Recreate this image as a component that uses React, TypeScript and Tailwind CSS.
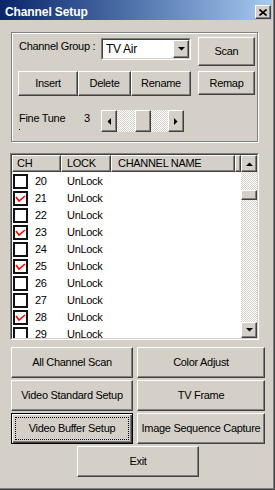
import React from 'react';

const raised =
  'bg-[#d4d0c8] border border-t-white border-l-white border-r-[#404040] border-b-[#404040] shadow-[inset_-1px_-1px_0_#808080]';
const checker =
  'bg-[image:repeating-conic-gradient(#d4d0c8_0_25%,#ffffff_0_50%)] bg-[length:2px_2px]';

function Btn({ className = '', children, focused = false }: { className?: string; children: React.ReactNode; focused?: boolean }) {
  if (focused) {
    return (
      <div className={`bg-[#d4d0c8] border border-black shadow-[inset_1px_1px_0_#fff,inset_-1px_-1px_0_#404040,inset_-2px_-2px_0_#808080] p-[3px] flex whitespace-nowrap ${className}`}>
        <div className="flex-1 flex items-center justify-center border border-dotted border-black">{children}</div>
      </div>
    );
  }
  return <div className={`${raised} flex items-center justify-center whitespace-nowrap ${className}`}>{children}</div>;
}

function Tri({ dir }: { dir: 'up' | 'down' | 'left' | 'right' }) {
  const pts = {
    up: '0,4 7,4 3.5,0.5',
    down: '0,0 7,0 3.5,3.5',
    left: '4,0 4,7 0.5,3.5',
    right: '0,0 0,7 3.5,3.5',
  }[dir];
  const vertical = dir === 'up' || dir === 'down';
  return (
    <svg width={vertical ? 7 : 4} height={vertical ? 4 : 7} viewBox={vertical ? '0 0 7 4' : '0 0 4 7'}>
      <polygon points={pts} fill="#000" />
    </svg>
  );
}

function Check({ on }: { on: boolean }) {
  return (
    <div className="ml-[1px] w-[15px] h-[15px] border-2 border-[#111] bg-white flex items-center justify-center">
      {on && (
        <svg width="11" height="11" viewBox="0 0 11 11">
          <polyline points="1,4 4,8 10,3" fill="none" stroke="#ff0000" strokeWidth="1.6" />
        </svg>
      )}
    </div>
  );
}

const rows = [20, 21, 22, 23, 24, 25, 26, 27, 28, 29];
const checked = [21, 23, 25, 28];

export default function App() {
  return (
    <div className="w-[275px] h-[490px] border-r border-b border-[#404040] font-['Liberation_Sans',Arial,sans-serif] text-[11px] tracking-[-0.3px] text-black">
      <div className="h-full border-r border-b border-[#808080]">
        <div className="h-full bg-[#d4d0c8] pr-[1px] flex flex-col">
          {/* title bar */}
          <div className="h-[20px] shrink-0 flex items-center pt-[4px] pl-[5px] pr-[1px] bg-linear-to-r from-[#0a246a] to-[#a6caf0]">
            <span className="flex-1 text-white font-bold text-[12px] tracking-[-0.1px]">Channel Setup</span>
            <div className={`${raised} w-[16px] h-[14px] flex items-center justify-center`}>
              <svg width="8" height="7" viewBox="0 0 8 7">
                <path d="M0.5 0.5 L7.5 6.5 M7.5 0.5 L0.5 6.5" stroke="#000" strokeWidth="1.6" />
              </svg>
            </div>
          </div>

          {/* channel group box */}
          <div className="ml-[11px] mt-[12px] w-[247px] h-[110px] shrink-0 border border-[#808080] shadow-[1px_1px_0_#fff,inset_1px_1px_0_#fff] pt-[4px] pl-[6px]">
            <div className="flex">
              <div className="w-[173px]">
                <div className="flex items-center mt-[1px] h-[22px]">
                  <span className="w-[83px] pl-[1px] mb-[6px]">Channel Group :</span>
                  <div className="w-[90px] h-[22px] border border-t-[#808080] border-l-[#808080] border-r-white border-b-white">
                    <div className="h-full border border-t-[#404040] border-l-[#404040] border-r-[#d4d0c8] border-b-[#d4d0c8] bg-white flex items-center">
                      <span className="flex-1 pl-[3px] text-[12px]">TV Air</span>
                      <div className={`${raised} w-[16px] h-full flex items-center justify-center`}>
                        <Tri dir="down" />
                      </div>
                    </div>
                  </div>
                </div>
                <div className="flex mt-[11px]">
                  <Btn className="w-[60px] h-[25px]">Insert</Btn>
                  <Btn className="w-[53px] h-[25px]">Delete</Btn>
                  <Btn className="w-[60px] h-[25px]">Rename</Btn>
                </div>
              </div>
              <div className="ml-[7px] flex flex-col">
                <Btn className="w-[57px] h-[29px]">Scan</Btn>
                <Btn className="w-[57px] h-[24px] mt-[5px]">Remap</Btn>
              </div>
            </div>
            <div className="flex mt-[14px]">
              <div className="w-[66px] pl-[1px] pt-[1px] leading-[14px]">
                <div>Fine Tune</div>
                <div className="w-[1px] h-[1px] bg-black mt-[4px]" />
              </div>
              <span className="w-[17px] pt-[1px] leading-[14px]">3</span>
              <div className="flex h-[22px] w-[83px]">
                <div className={`${raised} w-[16px] h-full flex items-center justify-center`}>
                  <Tri dir="left" />
                </div>
                <div className={`flex-1 flex ${checker}`}>
                  <div className={`${raised} ml-[18px] w-[16px] h-full`} />
                </div>
                <div className={`${raised} w-[16px] h-full flex items-center justify-center`}>
                  <Tri dir="right" />
                </div>
              </div>
            </div>
          </div>

          {/* channel list */}
          <div className="ml-[10px] mt-[11px] w-[249px] h-[187px] shrink-0 border border-t-[#808080] border-l-[#808080] border-r-white border-b-white">
            <div className="h-full flex border border-t-[#404040] border-l-[#404040] border-r-[#d4d0c8] border-b-[#d4d0c8] bg-white overflow-hidden">
              <div className="flex-1 flex flex-col overflow-hidden">
                <div className="flex h-[17px] shrink-0">
                  <div className={`${raised} w-[49px] pl-[4px] flex items-center`}>CH</div>
                  <div className={`${raised} w-[50px] pl-[5px] flex items-center`}>LOCK</div>
                  <div className={`${raised} w-[124px] pl-[6px] flex items-center`}>CHANNEL NAME</div>
                  <div className={`${raised} flex-1`} />
                </div>
                <div className="mt-[1px] flex flex-col">
                  {rows.map(n => (
                    <div key={n} className="flex h-[17px] shrink-0 items-center">
                      <div className="w-[49px] flex items-center">
                        <Check on={checked.includes(n)} />
                        <span className="ml-[7px]">{n}</span>
                      </div>
                      <span className="pl-[6px]">UnLock</span>
                    </div>
                  ))}
                </div>
              </div>
              <div className="w-[16px] flex flex-col">
                <div className={`${raised} h-[17px] shrink-0 flex items-center justify-center`}>
                  <Tri dir="up" />
                </div>
                <div className={`flex-1 ${checker}`}>
                  <div className={`${raised} mt-[18px] h-[10px]`} />
                </div>
                <div className={`${raised} h-[16px] shrink-0 flex items-center justify-center`}>
                  <Tri dir="down" />
                </div>
              </div>
            </div>
          </div>

          {/* bottom buttons */}
          <div className="mt-[7px] ml-[11px] flex flex-col gap-y-[2px]">
            <div className="flex gap-x-[4px]">
              <Btn className="w-[122px] h-[31px]">All Channel Scan</Btn>
              <Btn className="w-[128px] h-[31px]">Color Adjust</Btn>
            </div>
            <div className="flex gap-x-[4px]">
              <Btn className="w-[122px] h-[31px]">Video Standard Setup</Btn>
              <Btn className="w-[128px] h-[31px]">TV Frame</Btn>
            </div>
            <div className="flex gap-x-[4px]">
              <Btn focused className="w-[122px] h-[31px]">Video Buffer Setup</Btn>
              <Btn className="w-[128px] h-[31px]">Image Sequence Capture</Btn>
            </div>
            <div className="flex pl-[66px]">
              <Btn className="w-[122px] h-[31px]">Exit</Btn>
            </div>
          </div>
        </div>
      </div>
    </div>
  );
}
